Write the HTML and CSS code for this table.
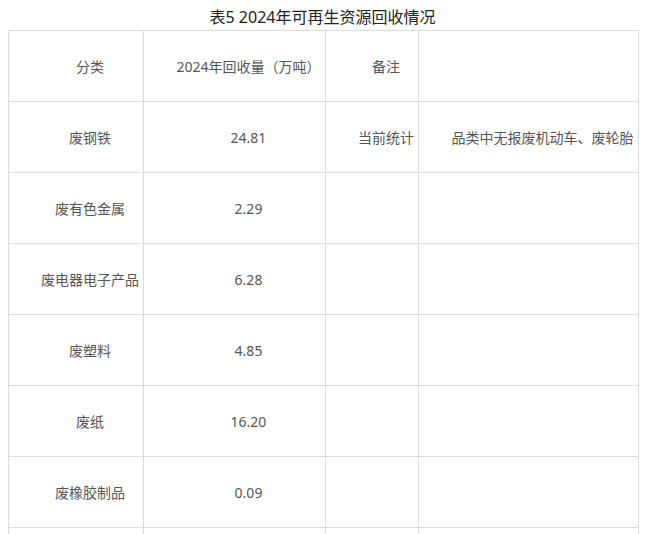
FILE: index.html
```html
<!DOCTYPE html>
<html lang="zh-CN">
<head>
<meta charset="utf-8">
<title>表5 2024年可再生资源回收情况</title>
<link rel="stylesheet" href="styles.css">
</head>
<body>
<div class="page">
  <h1 class="title">表5 2024年可再生资源回收情况</h1>
  <table class="data">
    <colgroup>
      <col class="c1"><col class="c2"><col class="c3"><col class="c4">
    </colgroup>
    <tbody>
      <tr><td>分类</td><td>2024年回收量（万吨）</td><td>备注</td><td></td></tr>
      <tr><td>废钢铁</td><td>24.81</td><td>当前统计</td><td>品类中无报废机动车、废轮胎</td></tr>
      <tr><td>废有色金属</td><td>2.29</td><td></td><td></td></tr>
      <tr><td>废电器电子产品</td><td>6.28</td><td></td><td></td></tr>
      <tr><td>废塑料</td><td>4.85</td><td></td><td></td></tr>
      <tr><td>废纸</td><td>16.20</td><td></td><td></td></tr>
      <tr><td>废橡胶制品</td><td>0.09</td><td></td><td></td></tr>
      <tr><td></td><td></td><td></td><td></td></tr>
    </tbody>
  </table>
</div>
</body>
</html>
```

FILE: styles.css
```css
html, body {
  margin: 0;
  padding: 0;
  background: #fff;
}
body {
  font-family: "Noto Sans", "Noto Sans CJK SC", sans-serif;
  color: #555;
}
.page {
  padding: 0 8px;
}
.title {
  margin: 0;
  padding-top: 4px;
  height: 26px;
  line-height: 26px;
  font-size: 16px;
  font-weight: normal;
  color: #222;
  text-align: center;
}
.data {
  table-layout: fixed;
  width: 630px;
  border-collapse: collapse;
}
.c1 { width: 135px; }
.c2 { width: 182px; }
.c3 { width: 93px; }
.c4 { width: 220px; }
.data td {
  border: 1px solid #dcdcdc;
  height: 68px;
  padding: 2px 0 0 28px;
  font-size: 14px;
  line-height: 20px;
  text-align: center;
  vertical-align: middle;
  white-space: nowrap;
  color: #555;
}
```
